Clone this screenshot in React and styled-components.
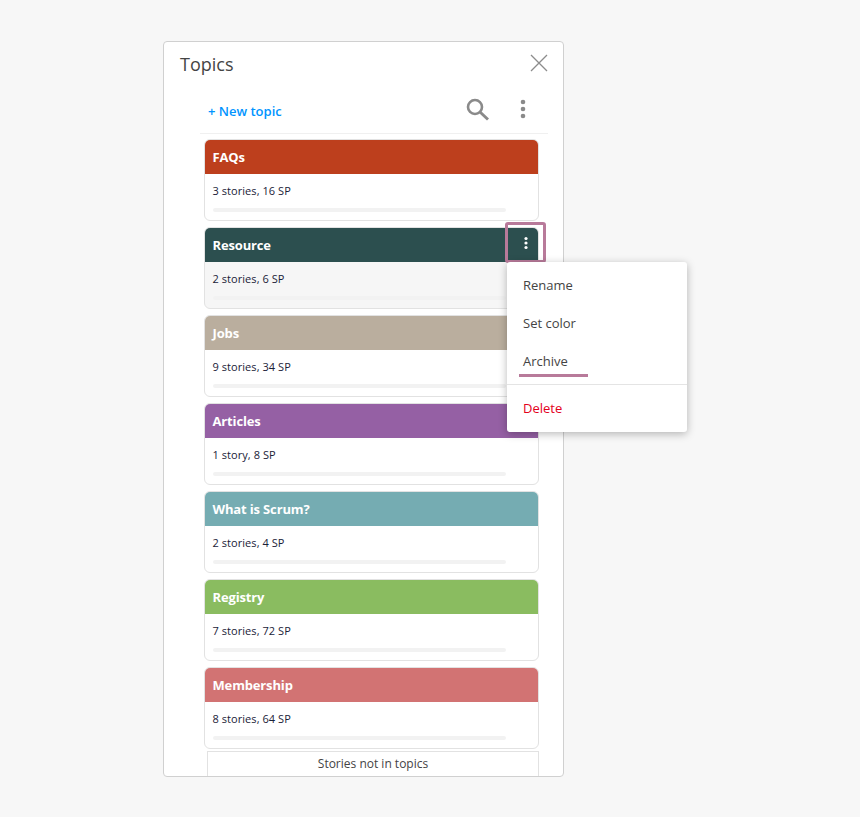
import styled, { createGlobalStyle } from "styled-components";

const GlobalStyle = createGlobalStyle`
  html, body {
    margin: 0;
    background-color: #f7f7f7;
    font-family: "Open Sans", "Noto Sans", sans-serif;
  }
`;

const Page = styled.div`
  width: 860px;
  height: 817px;
  padding: 41px 0 0 163px;
  box-sizing: border-box;
`;

const Panel = styled.section`
  width: 401px;
  height: 736px;
  box-sizing: border-box;
  border: 1px solid #d0d0d0;
  border-radius: 4px;
  background-color: #fff;
  display: flex;
  flex-direction: column;
`;

const PanelHeader = styled.header`
  height: 43px;
  flex-shrink: 0;
  padding: 0 15px 0 16px;
  display: flex;
  align-items: center;
  justify-content: space-between;
`;

const CloseButton = styled.div`
  display: flex;
  margin-bottom: 2px;
`;

const Title = styled.h1`
  margin: 0;
  font-size: 18px;
  font-weight: 400;
  color: #444;
`;

const Toolbar = styled.div`
  height: 49px;
  flex-shrink: 0;
  margin: 0 15px 0 36px;
  padding: 4px 22px 0 8px;
  box-sizing: border-box;
  display: flex;
  align-items: center;
  border-bottom: 1px solid #f0f0f0;
`;

const NewTopic = styled.a`
  font-size: 13px;
  font-weight: 600;
  color: #0094ff;
  margin-right: auto;
`;

const ToolIcons = styled.div`
  display: flex;
  align-items: center;
  gap: 31px;
  margin-bottom: 5px;
`;

const Cards = styled.div`
  margin: 5px 0 0 40px;
  display: flex;
  flex-direction: column;
  gap: 6px;
`;

const Card = styled.article`
  position: relative;
  width: 335px;
  height: 82px;
  box-sizing: border-box;
  border: 1px solid #e2e2e2;
  border-radius: 6px;
  background-color: ${(p) => (p.$active ? "#f6f6f6" : "#fff")};
`;

const CardHead = styled.div`
  height: 34px;
  padding: 0 7.5px;
  display: flex;
  align-items: center;
  justify-content: space-between;
  border-radius: 5px 5px 0 0;
  background-color: ${(p) => p.$color};
  color: #fff;
  font-size: 13px;
  font-weight: 700;
  letter-spacing: -0.15px;
`;

const Stats = styled.div`
  margin: 9px 0 0 7.5px;
  font-size: 11px;
  line-height: 15px;
  font-weight: 500;
  letter-spacing: 0.06px;
  color: #1a2238;
`;

const Progress = styled.div`
  width: 293px;
  height: 4px;
  margin: 10px 0 0 8px;
  border-radius: 2px;
  background-color: #f2f2f2;
`;

const Highlight = styled.div`
  position: absolute;
  left: 300px;
  top: -6px;
  width: 41px;
  height: 41px;
  box-sizing: border-box;
  border: 3px solid #b87a9a;
  border-radius: 3px;
  display: flex;
  align-items: center;
  justify-content: center;
`;

const Menu = styled.div`
  position: absolute;
  left: 302px;
  top: 34px;
  z-index: 2;
  width: 180px;
  height: 170px;
  border-radius: 3px;
  background-color: #fff;
  box-shadow: 0 2px 8px rgba(0, 0, 0, 0.28);
  padding-top: 4px;
  box-sizing: border-box;
`;

const MenuItem = styled.div`
  position: relative;
  height: 38px;
  padding-left: 16px;
  display: flex;
  align-items: center;
  font-size: 13px;
  color: ${(p) => (p.$danger ? "#e3001b" : "#444")};
`;

const MenuRule = styled.div`
  height: 1px;
  margin-top: 4px;
  margin-bottom: 4px;
  background-color: #e4e4e4;
`;

const Underline = styled.span`
  position: absolute;
  left: 12px;
  bottom: 3px;
  width: 69px;
  height: 3px;
  background-color: #b87a9a;
`;

const Footer = styled.div`
  flex: 1;
  margin: 2px 24px 0 43px;
  padding-bottom: 2px;
  border: 1px solid #e2e2e2;
  border-bottom: 0;
  display: flex;
  align-items: center;
  justify-content: center;
  font-size: 12px;
  color: #444;
`;

const topics = [
  { name: "FAQs", color: "#bd3f1d", stats: "3 stories, 16 SP" },
  { name: "Resource", color: "#2c4f4f", stats: "2 stories, 6 SP", active: true },
  { name: "Jobs", color: "#baae9e", stats: "9 stories, 34 SP" },
  { name: "Articles", color: "#9560a4", stats: "1 story, 8 SP" },
  { name: "What is Scrum?", color: "#75acb2", stats: "2 stories, 4 SP" },
  { name: "Registry", color: "#8abc60", stats: "7 stories, 72 SP" },
  { name: "Membership", color: "#d27373", stats: "8 stories, 64 SP" },
];

const CloseIcon = () => (
  <svg width="18" height="18" viewBox="0 0 18 18" fill="none" stroke="#8c8c8c" strokeWidth="1.3">
    <path d="M1 1l16 16M17 1L1 17" />
  </svg>
);

const SearchIcon = () => (
  <svg width="24" height="24" viewBox="0 0 24 24" fill="none" stroke="#8a8a8a">
    <circle cx="10" cy="10" r="7" strokeWidth="2.6" />
    <path d="M15 15l8 7.5" strokeWidth="3" />
  </svg>
);

const Kebab = () => (
  <svg width="6" height="20" viewBox="0 0 6 20" fill="#8a8a8a">
    <circle cx="3" cy="3" r="2.3" />
    <circle cx="3" cy="10" r="2.3" />
    <circle cx="3" cy="17" r="2.3" />
  </svg>
);

const SmallKebab = () => (
  <svg width="4" height="14" viewBox="0 0 4 14" fill="#fff">
    <circle cx="2" cy="2.5" r="1.6" />
    <circle cx="2" cy="7" r="1.6" />
    <circle cx="2" cy="11.5" r="1.6" />
  </svg>
);

const App = () => {
  return (
    <Page>
      <GlobalStyle />
      <Panel>
        <PanelHeader>
          <Title>Topics</Title>
          <CloseButton>
            <CloseIcon />
          </CloseButton>
        </PanelHeader>
        <Toolbar>
          <NewTopic>+ New topic</NewTopic>
          <ToolIcons>
            <SearchIcon />
            <Kebab />
          </ToolIcons>
        </Toolbar>
        <Cards>
          {topics.map((t) => (
            <Card key={t.name} $active={t.active}>
              <CardHead $color={t.color}>{t.name}</CardHead>
              <Stats>{t.stats}</Stats>
              <Progress />
              {t.active && (
                <>
                  <Highlight>
                    <SmallKebab />
                  </Highlight>
                  <Menu>
                    <MenuItem>Rename</MenuItem>
                    <MenuItem>Set color</MenuItem>
                    <MenuItem>
                      Archive
                      <Underline />
                    </MenuItem>
                    <MenuRule />
                    <MenuItem $danger>Delete</MenuItem>
                  </Menu>
                </>
              )}
            </Card>
          ))}
        </Cards>
        <Footer>Stories not in topics</Footer>
      </Panel>
    </Page>
  );
};

export default App;
